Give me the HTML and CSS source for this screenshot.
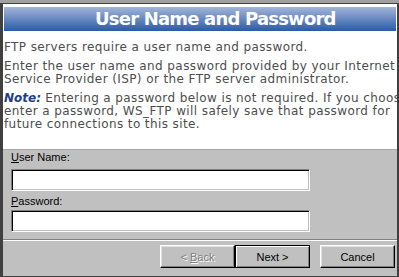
FILE: index.html
```html
<!DOCTYPE html>
<html lang="en">
<head>
    <meta charset="UTF-8">
    <title>User Name and Password</title>
    <link rel="stylesheet" href="styles.css">
</head>
<body>
    <div class="dialog">
        <div class="topbar"></div>
        <div class="window">
            <div class="info">
                <div class="banner">User Name and Password</div>
                <p class="para first">FTP servers require a user name and password.</p>
                <p class="para">Enter the user name and password provided by your Internet<br>Service Provider (ISP) or the FTP server administrator.</p>
                <p class="para"><b class="note">Note:</b> Entering a password below is not required. If you choose to<br>enter a password, WS_FTP will safely save that password for<br>future connections to this site.</p>
            </div>
            <div class="form">
                <label class="field-label" for="user"><u>U</u>ser Name:</label>
                <input class="field" id="user" type="text">
                <label class="field-label second" for="pass"><u>P</u>assword:</label>
                <input class="field" id="pass" type="password">
            </div>
            <div class="buttons">
                <button class="btn back" disabled>&lt; <u>B</u>ack</button>
                <button class="btn default">Next &gt;</button>
                <button class="btn cancel">Cancel</button>
            </div>
        </div>
    </div>
</body>
</html>
```

FILE: styles.css
```css
body {
    margin: 0;
    background-color: #c0c0c0;
}
.dialog {
    width: 399px;
    height: 277px;
    display: flex;
    flex-direction: column;
    overflow: hidden;
}
.topbar {
    height: 3px;
    background-color: #a0a0a0;
    border-bottom: 1px solid #404040;
}
.window {
    flex: 1;
    display: flex;
    flex-direction: column;
    border-left: 3px solid #404040;
    border-right: 2px solid #404040;
    border-bottom: 1px solid #404040;
    background-color: #c0c0c0;
}
.info {
    height: 146px;
    background-color: #ffffff;
    border-bottom: 1px solid #a8a8a8;
    padding: 3px 1px 0 1px;
    box-sizing: border-box;
    overflow: hidden;
}
.banner {
    height: 24px;
    line-height: 24px;
    padding-left: 91px;
    background: linear-gradient(#a3b5da, #2a5ba8);
    color: #ffffff;
    font-family: "DejaVu Sans", Verdana, sans-serif;
    font-weight: bold;
    font-size: 18px;
    letter-spacing: -0.8px;
}
.para {
    margin: 6px 0 0;
    font-family: "DejaVu Sans", Verdana, sans-serif;
    font-size: 12px;
    letter-spacing: 0.4px;
    line-height: 13px;
    color: #4d4d4d;
    white-space: nowrap;
}
.para.first {
    margin-top: 10px;
}
.note {
    color: #1f3c88;
    font-style: italic;
    letter-spacing: 0;
}
.form {
    display: flex;
    flex-direction: column;
    align-items: flex-start;
    padding: 1px 0 0 8px;
}
.field-label {
    margin: 0 0 5px;
    font-family: "Liberation Sans", Arial, sans-serif;
    font-size: 11px;
    line-height: 13px;
    color: #000000;
}
.field-label.second {
    margin: 4px 0 2px;
}
.field {
    width: 299px;
    height: 22px;
    margin: 0;
    padding: 0 3px;
    box-sizing: border-box;
    border: 1px solid;
    border-color: #808080 #ffffff #ffffff #808080;
    box-shadow: inset 1px 1px 0 #000000, inset -1px -1px 0 #c0c0c0;
    background-color: #ffffff;
    font-family: "Liberation Sans", Arial, sans-serif;
    font-size: 11px;
    outline: none;
}
.buttons {
    margin-top: 7px;
    border-top: 1px solid #808080;
    box-shadow: inset 0 1px 0 #ffffff;
    display: flex;
    justify-content: flex-end;
    padding: 5px 2px 0 0;
}
.btn {
    width: 75px;
    height: 23px;
    margin: 0;
    padding: 0;
    box-sizing: border-box;
    font-family: "Liberation Sans", Arial, sans-serif;
    font-size: 11px;
    color: #000000;
    background-color: #c0c0c0;
    border: 1px solid;
    border-color: #ffffff #000000 #000000 #ffffff;
    box-shadow: inset -1px -1px 0 #808080, inset 1px 1px 0 #dfdfdf;
}
.btn.back {
    color: #808080;
    text-shadow: 1px 1px 0 #ffffff;
}
.btn.default {
    border-color: #000000;
    box-shadow: inset 1px 1px 0 #ffffff, inset -1px -1px 0 #808080;
}
.btn.cancel {
    margin-left: 10px;
}
```
